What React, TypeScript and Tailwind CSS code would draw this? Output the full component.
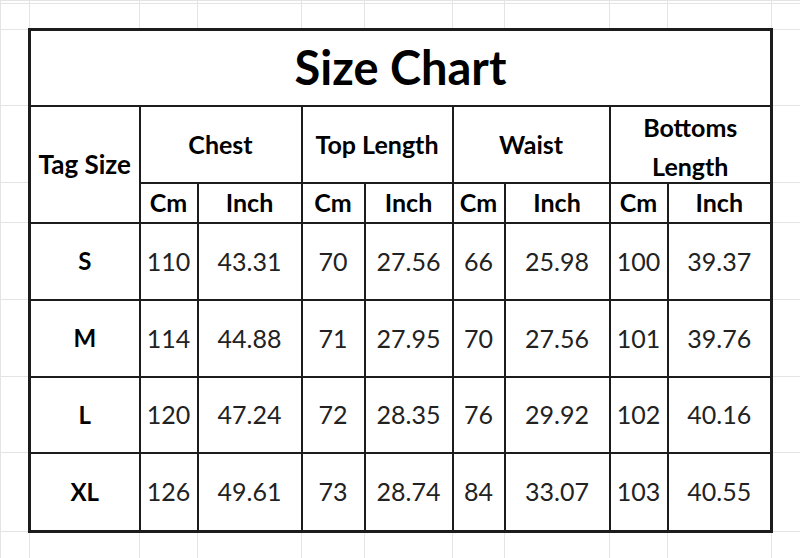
import React from 'react';

type Row = { tag: string; values: string[] };

const rows: Row[] = [
  { tag: 'S', values: ['110', '43.31', '70', '27.56', '66', '25.98', '100', '39.37'] },
  { tag: 'M', values: ['114', '44.88', '71', '27.95', '70', '27.56', '101', '39.76'] },
  { tag: 'L', values: ['120', '47.24', '72', '28.35', '76', '29.92', '102', '40.16'] },
  { tag: 'XL', values: ['126', '49.61', '73', '28.74', '84', '33.07', '103', '40.55'] },
];

const colWidths = [29, 110, 58, 104, 63, 88, 52, 105, 58, 104, 29];

// spreadsheet cell outside the chart: light grid lines only
const Blank = () => <td className="border border-[#e4e4e4] p-0" />;

// chart cell; edge props thicken the outer frame
function Cell({
  children,
  l,
  r,
  t,
  b,
  colSpan,
  rowSpan,
  className = '',
}: {
  children?: React.ReactNode;
  l?: boolean;
  r?: boolean;
  t?: boolean;
  b?: boolean;
  colSpan?: number;
  rowSpan?: number;
  className?: string;
}) {
  return (
    <td
      colSpan={colSpan}
      rowSpan={rowSpan}
      className={[
        'border-2 border-[#1c1c1c] p-0 text-center align-middle whitespace-nowrap',
        l ? 'border-l-[3px]' : '',
        r ? 'border-r-[3px]' : '',
        t ? 'border-t-[3px]' : '',
        b ? 'border-b-[3px]' : '',
        className,
      ].join(' ')}
    >
      {children}
    </td>
  );
}

export default function App() {
  return (
    <div className="w-[800px] h-[558px] overflow-hidden bg-white font-['Lato',sans-serif]">
      <table className="table-fixed border-collapse w-[800px]">
        <colgroup>
          {colWidths.map((w, i) => (
            <col key={i} style={{ width: w }} />
          ))}
        </colgroup>
        <tbody>
          <tr className="h-[3px]">
            {colWidths.map((_, i) => (
              <Blank key={i} />
            ))}
          </tr>
          <tr className="h-[26px]">
            {colWidths.map((_, i) => (
              <Blank key={i} />
            ))}
          </tr>

          {/* title */}
          <tr className="h-[76px]">
            <Blank />
            <Cell colSpan={9} l r t className="text-[47px] leading-none font-bold text-black">
              Size Chart
            </Cell>
            <Blank />
          </tr>

          {/* group headers */}
          <tr className="h-[77px]">
            <Blank />
            <Cell rowSpan={2} l className="text-[26px] leading-none font-bold text-black">
              Tag Size
            </Cell>
            <Cell colSpan={2} className="text-[25px] leading-none font-bold text-black">
              Chest
            </Cell>
            <Cell colSpan={2} className="text-[25px] leading-none font-bold text-black">
              Top Length
            </Cell>
            <Cell colSpan={2} className="text-[25px] leading-none font-bold text-black">
              Waist
            </Cell>
            <Cell colSpan={2} r className="text-[25px] font-bold text-black">
              <div className="h-[73px] flex flex-col justify-center leading-[39px] pt-[6px]">
                <span>Bottoms</span>
                <span>Length</span>
              </div>
            </Cell>
            <Blank />
          </tr>

          {/* unit headers */}
          <tr className="h-[40px]">
            <Blank />
            {['Cm', 'Inch', 'Cm', 'Inch', 'Cm', 'Inch', 'Cm', 'Inch'].map((u, i) => (
              <Cell key={i} r={i === 7} className="text-[25px] leading-none font-bold text-black">
                {u}
              </Cell>
            ))}
            <Blank />
          </tr>

          {rows.map((row, ri) => {
            const last = ri === rows.length - 1;
            return (
              <tr key={row.tag} className={last ? 'h-[79px]' : ri === 2 ? 'h-[76px]' : 'h-[77px]'}>
                <Blank />
                <Cell l b={last} className="text-[24px] leading-none font-bold text-black">
                  {row.tag}
                </Cell>
                {row.values.map((v, vi) => (
                  <Cell key={vi} r={vi === 7} b={last} className="text-[25px] leading-none text-[#222]">
                    {v}
                  </Cell>
                ))}
                <Blank />
              </tr>
            );
          })}

          <tr className="h-[27px]">
            {colWidths.map((_, i) => (
              <Blank key={i} />
            ))}
          </tr>
        </tbody>
      </table>
    </div>
  );
}
